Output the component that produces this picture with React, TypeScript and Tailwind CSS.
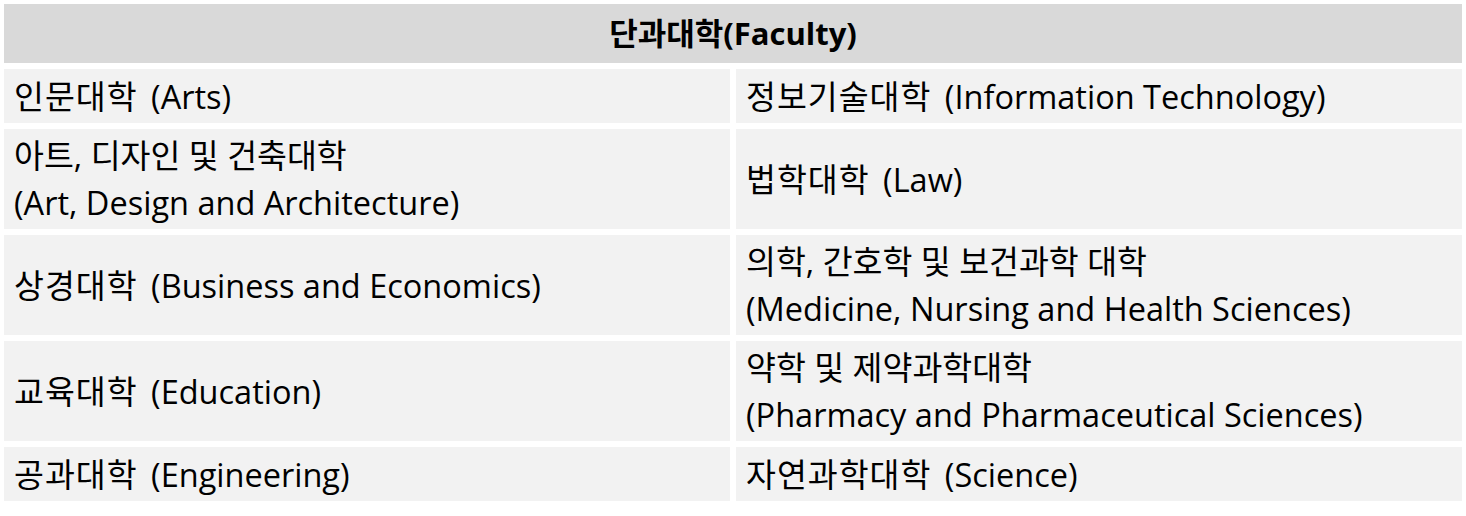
import React from "react";

type Row = { left: string[]; right: string[]; tall?: boolean };

const rows: Row[] = [
  { left: ["인문대학 (Arts)"], right: ["정보기술대학 (Information Technology)"] },
  {
    left: ["아트, 디자인 및 건축대학", "(Art, Design and Architecture)"],
    right: ["법학대학 (Law)"],
    tall: true,
  },
  {
    left: ["상경대학 (Business and Economics)"],
    right: ["의학, 간호학 및 보건과학 대학", "(Medicine, Nursing and Health Sciences)"],
    tall: true,
  },
  {
    left: ["교육대학 (Education)"],
    right: ["약학 및 제약과학대학", "(Pharmacy and Pharmaceutical Sciences)"],
    tall: true,
  },
  { left: ["공과대학 (Engineering)"], right: ["자연과학대학 (Science)"] },
];

// Korean name and English name on one line: hangul runs a bit wider in the source
const Line = ({ text }: { text: string }) => {
  const idx = text.indexOf(" (");
  if (idx <= 0) return <>{text}</>;
  return (
    <>
      <span className="tracking-[1px] mr-[5px]">{text.slice(0, idx)}</span>
      {text.slice(idx)}
    </>
  );
};

const Cell = ({ lines, tall }: { lines: string[]; tall?: boolean }) => (
  <div
    className={`bg-[#f2f2f2] flex flex-col justify-center px-[10px] ${
      tall ? "h-[100px]" : "h-[54px]"
    }`}
  >
    {lines.map((l, i) => (
      <div key={i} className="leading-[47px] whitespace-nowrap">
        <Line text={l} />
      </div>
    ))}
  </div>
);

export default function App() {
  return (
    <div
      className="w-[1466px] h-[516px] bg-white p-[4px] text-black text-[32.5px] font-normal"
      style={{ fontFamily: '"Open Sans", "Noto Sans CJK KR", sans-serif' }}
    >
      <div className="grid grid-cols-2 gap-[6px]">
        {/* Header */}
        <div className="col-span-2 h-[59px] bg-[#d9d9d9] flex items-center justify-center font-bold text-[31px]">
          단과대학(Faculty)
        </div>
        {rows.map((r, i) => (
          <React.Fragment key={i}>
            <Cell lines={r.left} tall={r.tall} />
            <Cell lines={r.right} tall={r.tall} />
          </React.Fragment>
        ))}
      </div>
    </div>
  );
}
